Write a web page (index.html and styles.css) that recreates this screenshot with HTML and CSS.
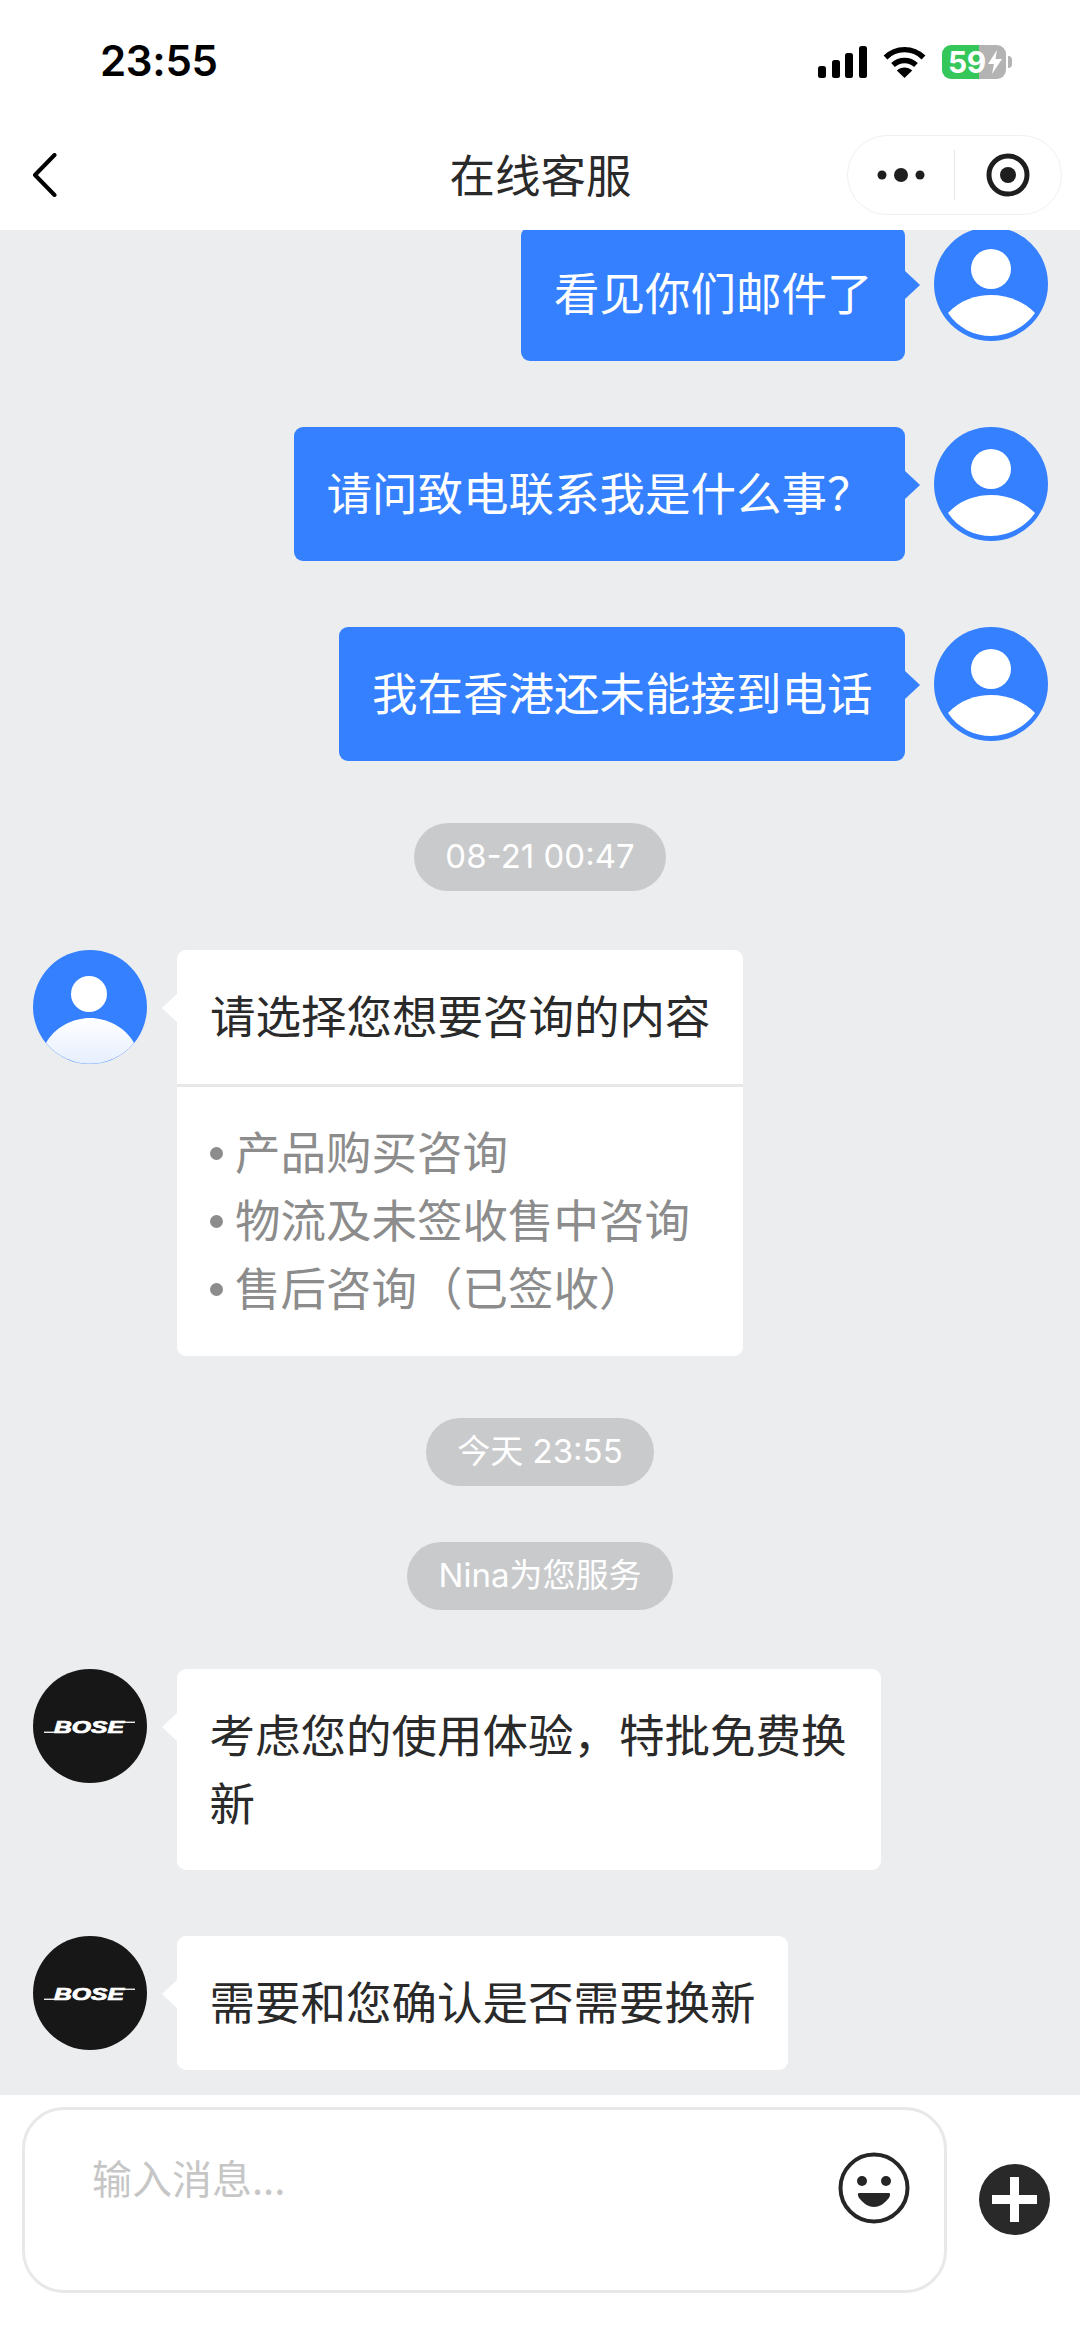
FILE: index.html
```html
<!DOCTYPE html>
<html lang="zh-CN">
<head>
<meta charset="utf-8">
<title>在线客服</title>
<link rel="stylesheet" href="styles.css">
</head>
<body>
<svg class="defs" width="0" height="0" aria-hidden="true">
  <defs>
    <linearGradient id="bodyFade" x1="0" y1="0" x2="0" y2="1">
      <stop offset="0" stop-color="#ffffff"/>
      <stop offset="1" stop-color="#e6efff"/>
    </linearGradient>
    <symbol id="user" viewBox="0 0 114 114">
      <circle cx="57" cy="57" r="57" fill="#3480ff"/>
      <circle cx="57" cy="42" r="20" fill="#fff"/>
      <path d="M14 86C26 73 42 68 57 68C72 68 88 73 101 86C90 101 74 109 57 109C40 109 24 101 14 86Z" fill="#fff"/>
    </symbol>
    <symbol id="agent" viewBox="0 0 114 114">
      <circle cx="57" cy="57" r="57" fill="#3480ff"/>
      <circle cx="56" cy="44" r="18" fill="#fff"/>
      <path d="M13 93C22 77 40 68 57 68C74 68 92 77 101 93A57 57 0 0 1 13 93Z" fill="url(#bodyFade)"/>
    </symbol>
    <symbol id="bose" viewBox="0 0 114 114">
      <circle cx="57" cy="57" r="57" fill="#171717"/>
      <rect x="11" y="62.600" width="16" height="1.300" fill="#fff"/>
      <rect x="86" y="52.600" width="16" height="1.300" fill="#fff"/>
      <text x="21" y="64" class="bose-word" textLength="70" lengthAdjust="spacingAndGlyphs">BOSE</text>
    </symbol>
  </defs>
</svg>

<div class="phone">
  <header class="status">
    <span class="clock">23:55</span>
    <div class="status-icons">
      <svg class="signal" width="49" height="32" viewBox="0 0 49 32" fill="#000">
        <rect x="0" y="20" width="8" height="12" rx="2.500"/>
        <rect x="14" y="14" width="8" height="18" rx="2.500"/>
        <rect x="27" y="7" width="8" height="25" rx="2.500"/>
        <rect x="41" y="0" width="8" height="32" rx="2.500"/>
      </svg>
      <svg class="wifi" width="43" height="32" viewBox="0 0 43 32" fill="none" stroke="#000" stroke-width="5.400">
        <path d="M2.500 11.500C13 1 30 1 40.500 11.500"/>
        <path d="M10 19C16.500 13 26.500 13 33 19"/>
        <path d="M21.500 32L13.800 24.500C18 20.500 25 20.500 29.200 24.500Z" fill="#000" stroke="none"/>
      </svg>
      <div class="battery">
        <div class="battery-body">
          <span class="battery-level">59</span>
          <svg class="bolt" width="14" height="24" viewBox="0 0 14 24" fill="#fff"><path d="M9 0L0 14H6L4 24L14 9H7.500Z"/></svg>
        </div>
        <span class="battery-cap"></span>
      </div>
    </div>
  </header>

  <nav class="navbar">
    <div class="nav-left">
      <svg width="25" height="44" viewBox="0 0 25 44" fill="none" stroke="#000" stroke-width="4" stroke-linecap="round" stroke-linejoin="round"><path d="M22.500 2L3 22L22.500 42"/></svg>
    </div>
    <h1 class="nav-title">在线客服</h1>
    <div class="nav-right">
      <div class="capsule">
        <div class="capsule-cell">
          <svg width="48" height="16" viewBox="0 0 48 16" fill="#1e1e1e"><circle cx="5" cy="8" r="4.500"/><circle cx="24" cy="8" r="7"/><circle cx="43" cy="8" r="4.500"/></svg>
        </div>
        <span class="capsule-line"></span>
        <div class="capsule-cell">
          <svg width="44" height="44" viewBox="0 0 44 44"><circle cx="22" cy="22" r="19" fill="none" stroke="#1e1e1e" stroke-width="5"/><circle cx="22" cy="22" r="8" fill="#1e1e1e"/></svg>
        </div>
      </div>
    </div>
  </nav>

  <main class="chat">
    <div class="messages">
      <div class="row row-me">
        <div class="bubble bubble-me">看见你们邮件了</div>
        <svg class="avatar"><use href="#user"/></svg>
      </div>
      <div class="row row-me">
        <div class="bubble bubble-me">请问致电联系我是什么事？</div>
        <svg class="avatar"><use href="#user"/></svg>
      </div>
      <div class="row row-me row-end">
        <div class="bubble bubble-me">我在香港还未能接到电话</div>
        <svg class="avatar"><use href="#user"/></svg>
      </div>

      <div class="pill pill-first">08-21 00:47</div>

      <div class="row row-end">
        <svg class="avatar"><use href="#agent"/></svg>
        <div class="bubble bubble-menu">
          <div class="menu-title">请选择您想要咨询的内容</div>
          <ul class="menu-list">
            <li>产品购买咨询</li>
            <li>物流及未签收售中咨询</li>
            <li>售后咨询（已签收）</li>
          </ul>
        </div>
      </div>

      <div class="pill pill-today pill-stacked">今天 23:55</div>
      <div class="pill pill-nina">Nina为您服务</div>

      <div class="row">
        <svg class="avatar"><use href="#bose"/></svg>
        <div class="bubble bubble-wide">考虑您的使用体验，特批免费换新</div>
      </div>
      <div class="row">
        <svg class="avatar"><use href="#bose"/></svg>
        <div class="bubble">需要和您确认是否需要换新</div>
      </div>
    </div>
  </main>

  <footer class="composer">
    <div class="input">
      <span class="placeholder">输入消息...</span>
      <svg class="emoji" width="72" height="72" viewBox="0 0 72 72">
        <circle cx="36" cy="36" r="33.500" fill="none" stroke="#262626" stroke-width="4"/>
        <circle cx="24" cy="29" r="5" fill="#262626"/>
        <circle cx="48" cy="29" r="5" fill="#262626"/>
        <path d="M21 41H51C53 41 52 45 50 47C46 52 41 55 36 55C31 55 26 52 22 47C20 45 19 41 21 41Z" fill="#262626"/>
      </svg>
    </div>
    <svg class="plus" width="71" height="71" viewBox="0 0 71 71">
      <circle cx="35.500" cy="35.500" r="35.500" fill="#292929"/>
      <path d="M31 13H40V31H58V40H40V58H31V40H13V31H31Z" fill="#fff"/>
    </svg>
  </footer>
</div>
</body>
</html>
```

FILE: styles.css
```css
* { box-sizing: border-box; }

html, body {
  margin: 0;
  padding: 0;
  background: #fff;
}

body {
  font-family: "Noto Sans CJK SC", "Inter", sans-serif;
  color: #2a2a2a;
}

.defs { position: absolute; }

.bose-word {
  font-family: "Liberation Sans", sans-serif;
  font-size: 16px;
  font-weight: 700;
  font-style: italic;
  fill: #fff;
  stroke: #fff;
  stroke-width: 0.7px;
}

.phone {
  width: 1080px;
  height: 2337px;
  display: flex;
  flex-direction: column;
  overflow: hidden;
}

/* status bar */
.status {
  height: 120px;
  flex: none;
  display: flex;
  justify-content: space-between;
  align-items: flex-start;
  padding: 36px 68px 0 100px;
}

.clock {
  font-family: "Inter", sans-serif;
  font-size: 42px;
  line-height: 50px;
  font-weight: 600;
  letter-spacing: -0.3px;
  color: #000;
}

.status-icons {
  display: flex;
  align-items: center;
  gap: 16px;
  padding-top: 9px;
}

.battery {
  display: flex;
  align-items: center;
  gap: 2px;
}

.battery-body {
  width: 64px;
  height: 34px;
  border-radius: 9px;
  display: flex;
  align-items: center;
  gap: 2px;
  padding-left: 6px;
  color: #fff;
  background: linear-gradient(90deg, #35c759 0, #35c759 37px, #b3b3b3 37px, #b3b3b3 100%);
}

.battery-level {
  font-family: "Inter", sans-serif;
  font-size: 30px;
  line-height: 34px;
  font-weight: 700;
  letter-spacing: -0.5px;
}

.battery-cap {
  width: 4px;
  height: 12px;
  background: #b3b3b3;
  border-radius: 0 4px 4px 0;
}

/* nav bar */
.navbar {
  height: 110px;
  flex: none;
  display: grid;
  grid-template-columns: 1fr auto 1fr;
  align-items: center;
  padding: 0 18px 0 19px;
}

.nav-left {
  display: flex;
  padding-left: 13px;
}

.nav-title {
  margin: 0 0 5px;
  font-size: 45.500px;
  line-height: 64px;
  font-weight: 400;
  color: #2a2a2a;
}

.nav-right {
  display: flex;
  justify-content: flex-end;
}

.capsule {
  width: 215px;
  height: 80px;
  border: 1px solid #f0f0f0;
  border-radius: 40px;
  background: #fff;
  display: flex;
  align-items: center;
}

.capsule-cell {
  flex: 1;
  display: flex;
  justify-content: center;
  align-items: center;
}

.capsule-line {
  width: 1px;
  height: 50px;
  background: #e6e6e6;
}

/* chat */
.chat {
  height: 1865px;
  flex: none;
  background: #ecedef;
  overflow: hidden;
}

.messages {
  display: flex;
  flex-direction: column;
  margin-top: -3px;
}

.row {
  display: flex;
  align-items: flex-start;
  gap: 29px;
  padding: 0 32px 0 33px;
  margin-bottom: 66px;
}

.row-me { justify-content: flex-end; }
.row-end { margin-bottom: 0; }

.avatar {
  width: 114px;
  height: 114px;
  flex: none;
}

.bubble {
  position: relative;
  background: #fff;
  border-radius: 9px;
  padding: 30px 32.500px 36px;
  font-size: 45.500px;
  line-height: 68px;
  color: #2a2a2a;
}

.bubble::before {
  content: "";
  position: absolute;
  top: 43px;
  left: -15px;
  width: 16px;
  height: 30px;
  background: inherit;
  clip-path: polygon(100% 0, 0 50%, 100% 100%);
}

.bubble-me {
  background: #3480ff;
  color: #fff;
}

.bubble-me::before {
  left: auto;
  right: -15px;
  clip-path: polygon(0 0, 100% 50%, 0 100%);
}

.row:not(.row-me) { gap: 30px; }

.bubble-wide {
  width: 704px;
  padding-bottom: 35px;
}

.bubble-menu {
  width: 566px;
  padding: 0;
}

.menu-title {
  padding: 30px 33px 36px;
  border-bottom: 3px solid #e8e8e8;
  white-space: nowrap;
}

.menu-list {
  list-style: none;
  margin: 0;
  padding: 29px 0 36px 33px;
  color: #8c8c8c;
}

.menu-list li {
  display: flex;
  align-items: center;
  gap: 12px;
  line-height: 68px;
  white-space: nowrap;
}

.menu-list li::before {
  content: "";
  flex: none;
  width: 13px;
  height: 13px;
  margin-top: 6px;
  border-radius: 50%;
  background: #8c8c8c;
}

.pill {
  align-self: center;
  height: 68px;
  border-radius: 34px;
  background: #c9cacc;
  color: #fff;
  font-family: "Inter", "Noto Sans CJK SC", sans-serif;
  font-size: 33px;
  line-height: 66px;
  text-align: center;
  margin: 62px 0 59px;
  white-space: nowrap;
}

.pill-first { width: 252px; }
.pill-today { width: 228px; }
.pill-nina { width: 266px; margin-top: 0; margin-bottom: 59px; }
.pill-stacked { margin-bottom: 56px; }

/* composer */
.composer {
  flex: 1;
  display: flex;
  align-items: flex-start;
  padding: 12px 0 0 22px;
  background: #fff;
}

.input {
  width: 925px;
  height: 186px;
  border: 3px solid #e8e8e8;
  border-radius: 42px;
  background: #fff;
  display: flex;
  justify-content: space-between;
  align-items: flex-start;
  padding: 42px 34px 0 67px;
}

.placeholder {
  margin-top: -3px;
  font-size: 40px;
  line-height: 56px;
  color: #c6c6c6;
}

.plus {
  margin: 57px 0 0 32px;
  flex: none;
}
```
